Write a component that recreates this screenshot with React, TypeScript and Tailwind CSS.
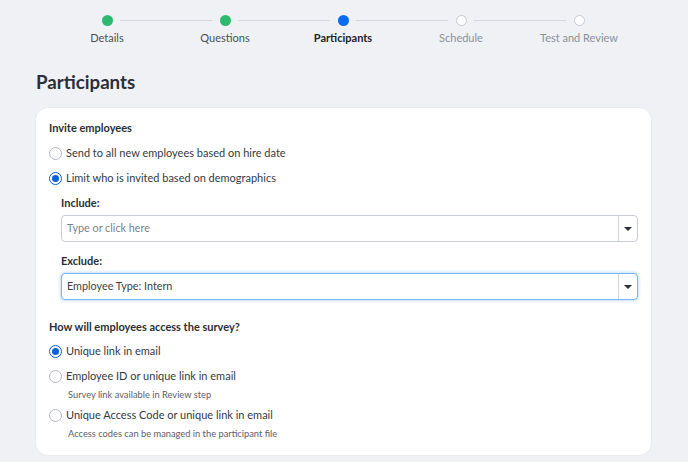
import React from "react";

const steps = [
  { label: "Details", state: "done" },
  { label: "Questions", state: "done" },
  { label: "Participants", state: "current" },
  { label: "Schedule", state: "todo" },
  { label: "Test and Review", state: "todo" },
];

function Stepper() {
  return (
    <div className="ml-[48px] flex w-[590px]">
      {steps.map((s, i) => (
        <div key={s.label} className="relative flex w-[118px] flex-col items-center">
          {i < steps.length - 1 && (
            <div className="absolute left-[72px] top-[20px] h-px w-[92px] bg-[#d3d6dc]" />
          )}
          <div className="mt-[15px] h-[11px] w-[11px] rounded-full">
            {s.state === "done" && <div className="h-full w-full rounded-full bg-[#2dba6e]" />}
            {s.state === "current" && <div className="h-full w-full rounded-full bg-[#0b6cf0]" />}
            {s.state === "todo" && (
              <div className="h-full w-full rounded-full border border-[#c5cad3] bg-white" />
            )}
          </div>
          <div
            className={
              "mt-[5px] text-[11px] leading-[14px] " +
              (s.state === "current"
                ? "font-bold text-[#1f232a]"
                : s.state === "done"
                ? "text-[#4a4f57]"
                : "text-[#8a9099]")
            }
          >
            {s.label}
          </div>
        </div>
      ))}
    </div>
  );
}

function Radio({ checked, label, note }: { checked?: boolean; label: string; note?: string }) {
  return (
    <div>
      <div className="flex items-center">
        {checked ? (
          <span className="flex h-[13px] w-[13px] items-center justify-center rounded-full border-[1.5px] border-[#0b5fd8] bg-white">
            <span className="h-[7px] w-[7px] rounded-full bg-[#0b5fd8]" />
          </span>
        ) : (
          <span className="h-[13px] w-[13px] rounded-full border border-[#b3b8c0] bg-white" />
        )}
        <span className="ml-[4px] text-[11px] leading-[16px] text-[#353a42]">{label}</span>
      </div>
      {note && (
        <div className="mb-[-3px] ml-[19px] mt-[5px] text-[9.3px] leading-[12px] text-[#5b6068]">
          {note}
        </div>
      )}
    </div>
  );
}

function Select({ value, placeholder, focused }: { value?: string; placeholder?: string; focused?: boolean }) {
  return (
    <div
      className={
        "flex h-[27px] items-stretch rounded-[4px] border bg-white " +
        (focused
          ? "border-[#78b6ef] shadow-[0_0_3px_1px_rgba(120,182,239,0.45)]"
          : "border-[#c7ccd4]")
      }
    >
      <div
        className={
          "flex flex-1 items-center px-[5px] text-[10.8px] " +
          (value ? "text-[#3a3f47]" : "text-[#7b8189]")
        }
      >
        {value ?? placeholder}
      </div>
      <div className="flex w-[19px] items-center justify-center border-l border-[#d3d6dc]">
        <svg width="8" height="4" viewBox="0 0 8 4">
          <path d="M0 0 L8 0 L4 4 Z" fill="#2b2f36" />
        </svg>
      </div>
    </div>
  );
}

export default function App() {
  return (
    <div
      className="min-h-[462px] w-[688px] bg-[#f0f1f5]"
      style={{ fontFamily: "Lato, 'Open Sans', sans-serif" }}
    >
      <Stepper />
      <h1 className="ml-[36px] mt-[24px] text-[18.7px] font-bold leading-[26px] text-[#2b2f36]">
        Participants
      </h1>
      <div className="ml-[36px] mt-[13px] w-[615px] rounded-[12px] bg-white px-[13px] pb-[18px] pt-[12px] shadow-[0_0_2px_rgba(0,0,0,0.08)]">
        <div className="text-[11px] font-bold leading-[16px] text-[#2b2f36]">Invite employees</div>
        <div className="mt-[9px] flex flex-col gap-[9px]">
          <Radio label="Send to all new employees based on hire date" />
          <Radio checked label="Limit who is invited based on demographics" />
        </div>
        <div className="ml-[12px] mt-[9px]">
          <div className="text-[11px] font-bold leading-[16px] text-[#2b2f36]">Include:</div>
          <div className="mt-[4px]">
            <Select placeholder="Type or click here" />
          </div>
          <div className="mt-[11px] text-[11px] font-bold leading-[16px] text-[#2b2f36]">Exclude:</div>
          <div className="mt-[4px]">
            <Select value="Employee Type: Intern" focused />
          </div>
        </div>
        <div className="mt-[19px] text-[11px] font-bold leading-[16px] text-[#2b2f36]">
          How will employees access the survey?
        </div>
        <div className="mt-[8px] flex flex-col gap-[9px]">
          <Radio checked label="Unique link in email" />
          <Radio label="Employee ID or unique link in email" note="Survey link available in Review step" />
          <Radio
            label="Unique Access Code or unique link in email"
            note="Access codes can be managed in the participant file"
          />
        </div>
      </div>
    </div>
  );
}
